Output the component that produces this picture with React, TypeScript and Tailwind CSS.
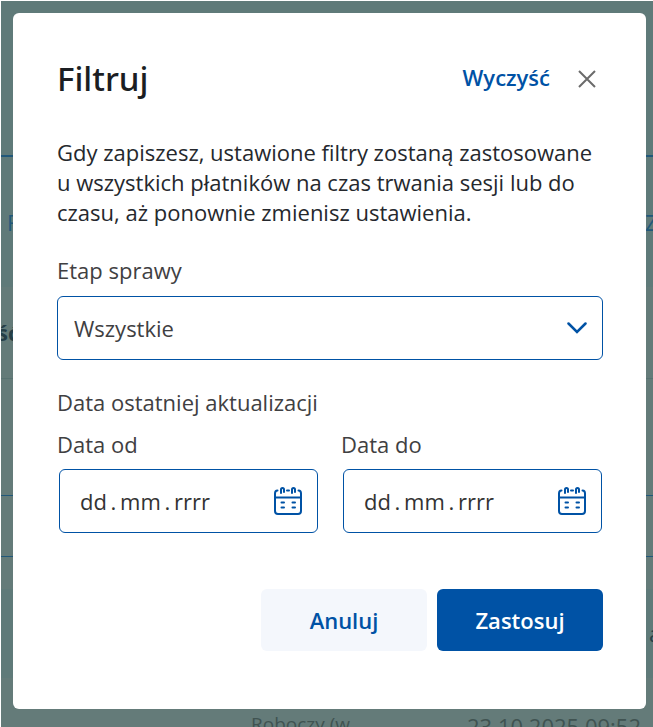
import type { ReactNode } from 'react';

interface DateFieldProps {
  id: string;
  label: string;
}

// Six-per-em spaces keep the dots close to the parts around them
const DATE_PLACEHOLDER = 'dd\u2006.\u2006mm\u2006.\u2006rrrr';

function CalendarIcon() {
  return (
    <svg
      width="28"
      height="28"
      viewBox="0 0 28 28"
      fill="none"
      stroke="currentColor"
      strokeWidth="2"
      strokeLinecap="round"
      aria-hidden="true"
    >
      <path d="M3.500 3.500C2 3.500 1 4.700 1 6.500V24a3 3 0 0 0 3 3h20a3 3 0 0 0 3-3V6.500C27 4.700 26 3.500 24.500 3.500" />
      <path d="M1 10.500h26" />
      <path d="M13 3.500h2" />
      <path d="M7 6V2.500a1.500 1.500 0 0 1 3 0V5" />
      <path d="M18 6V2.500a1.500 1.500 0 0 1 3 0V5" />
      <path d="M7.500 15.500h2.500M18.500 15.500h2.500M7.500 20.500h2.500M18.500 20.500h2.500" />
    </svg>
  );
}

function DateField({ id, label }: DateFieldProps) {
  return (
    <div className="flex min-w-0 flex-1 flex-col gap-2">
      <label htmlFor={id} className="text-[22px] leading-[34px] text-[#3f4042]">
        {label}
      </label>
      <div className="relative mr-px ml-0.5">
        <input
          id={id}
          type="text"
          placeholder={DATE_PLACEHOLDER}
          className="h-16 w-full rounded-md border border-[#0052a5] bg-white pr-14 pl-5 text-[22px] text-[#333] outline-none placeholder:text-[#333]"
        />
        <button
          type="button"
          aria-label="Kalendarz"
          className="absolute inset-y-0 right-4 flex items-center text-[#0052a5]"
        >
          <CalendarIcon />
        </button>
      </div>
    </div>
  );
}

function TableRow({ className, children }: { className: string; children?: ReactNode }) {
  return <div className={`flex justify-between whitespace-nowrap ${className}`}>{children}</div>;
}

// Case list that stays dimmed under the dialog
function CaseList() {
  return (
    <div
      aria-hidden="true"
      className="absolute inset-0 overflow-hidden border-t border-l border-white bg-[#647b79] text-[22px]"
    >
      <TableRow className="h-[156px] border-b-2 border-[#21587a] bg-[#5f7a79]" />
      <TableRow className="h-[130px] items-center bg-[#5f7a79] pl-1.5 text-[#21587a]">
        <span>F</span>
        <span className="w-2">Z</span>
      </TableRow>
      <TableRow className="h-[92px] items-center border-b border-[#587271] text-[#263f47]">
        <span className="-ml-1 font-bold">ść</span>
      </TableRow>
      <TableRow className="h-[117px] border-b border-[#21587a]" />
      <TableRow className="h-[61px] border-b border-[#21587a]" />
      <TableRow className="h-8" />
      <TableRow className="h-[89px] items-center justify-end bg-[#5f7a79] text-[#263f47]">
        <span className="w-1">a</span>
      </TableRow>
      <TableRow className="pt-8 pr-3 pl-[250px] text-[#405351]">
        <span className="text-[19px]">Roboczy (w</span>
        <span>23.10.2025 09:52</span>
      </TableRow>
    </div>
  );
}

export default function App() {
  return (
    <div className="relative min-h-screen overflow-hidden font-['Open_Sans','Noto_Sans',sans-serif]">
      <CaseList />
      <div className="relative pt-[13px] pr-[7px] pb-[18px] pl-[13px]">
        <form
          role="dialog"
          aria-labelledby="filter-title"
          onSubmit={(e) => e.preventDefault()}
          className="rounded-md bg-white pt-11 pr-[43px] pb-[58px] pl-11"
        >
          <div className="flex items-center justify-between">
            <h2
              id="filter-title"
              className="font-['Noto_Sans','Open_Sans',sans-serif] text-[33px] leading-[44px] font-medium text-[#1b1e23]"
            >
              Filtruj
            </h2>
            <div className="flex items-center gap-7 pr-[7px]">
              <button type="button" className="pb-1 text-[22px] font-semibold text-[#0052a5]">
                Wyczyść
              </button>
              <button type="button" aria-label="Zamknij" className="text-[#6b6b6b]">
                <svg width="18" height="18" viewBox="0 0 18 18" fill="none" stroke="currentColor" strokeWidth="2" aria-hidden="true">
                  <path d="M1 1l16 16M17 1L1 17" />
                </svg>
              </button>
            </div>
          </div>

          <p className="mt-9 text-[22px] leading-[30px] text-[#25282d]">
            Gdy zapiszesz, ustawione filtry zostaną zastosowane
            <br />
            u wszystkich płatników na czas trwania sesji lub do
            <br />
            czasu, aż ponownie zmienisz ustawienia.
          </p>

          <div className="mt-[26px] flex flex-col gap-[9px]">
            <label htmlFor="stage" className="text-[22px] leading-[34px] text-[#3f4042]">
              Etap sprawy
            </label>
            <div className="relative">
              <select
                id="stage"
                className="h-16 w-full appearance-none rounded-md border border-[#0052a5] bg-white px-4 text-[22px] text-[#3f4042] outline-none"
              >
                <option>Wszystkie</option>
              </select>
              <svg
                width="20"
                height="12"
                viewBox="0 0 20 12"
                fill="none"
                stroke="currentColor"
                strokeWidth="2.500"
                strokeLinecap="round"
                className="pointer-events-none absolute top-[26px] right-4 text-[#0052a5]"
                aria-hidden="true"
              >
                <path d="M1.500 1.500L10 10l8.500-8.500" />
              </svg>
            </div>
          </div>

          <fieldset className="mt-6">
            <legend className="text-[22px] leading-[36px] text-[#3f4042]">Data ostatniej aktualizacji</legend>
            <div className="mt-[7px] flex gap-[22px]">
              <DateField id="date-from" label="Data od" />
              <DateField id="date-to" label="Data do" />
            </div>
          </fieldset>

          <div className="mt-14 flex justify-end gap-2.5">
            <button
              type="button"
              className="h-[62px] w-[166px] rounded-md bg-[#f4f7fc] text-[22px] font-semibold text-[#0052a5]"
            >
              Anuluj
            </button>
            <button type="submit" className="h-[62px] w-[166px] rounded-md bg-[#0052a5] text-[22px] font-semibold text-white">
              Zastosuj
            </button>
          </div>
        </form>
      </div>
    </div>
  );
}
